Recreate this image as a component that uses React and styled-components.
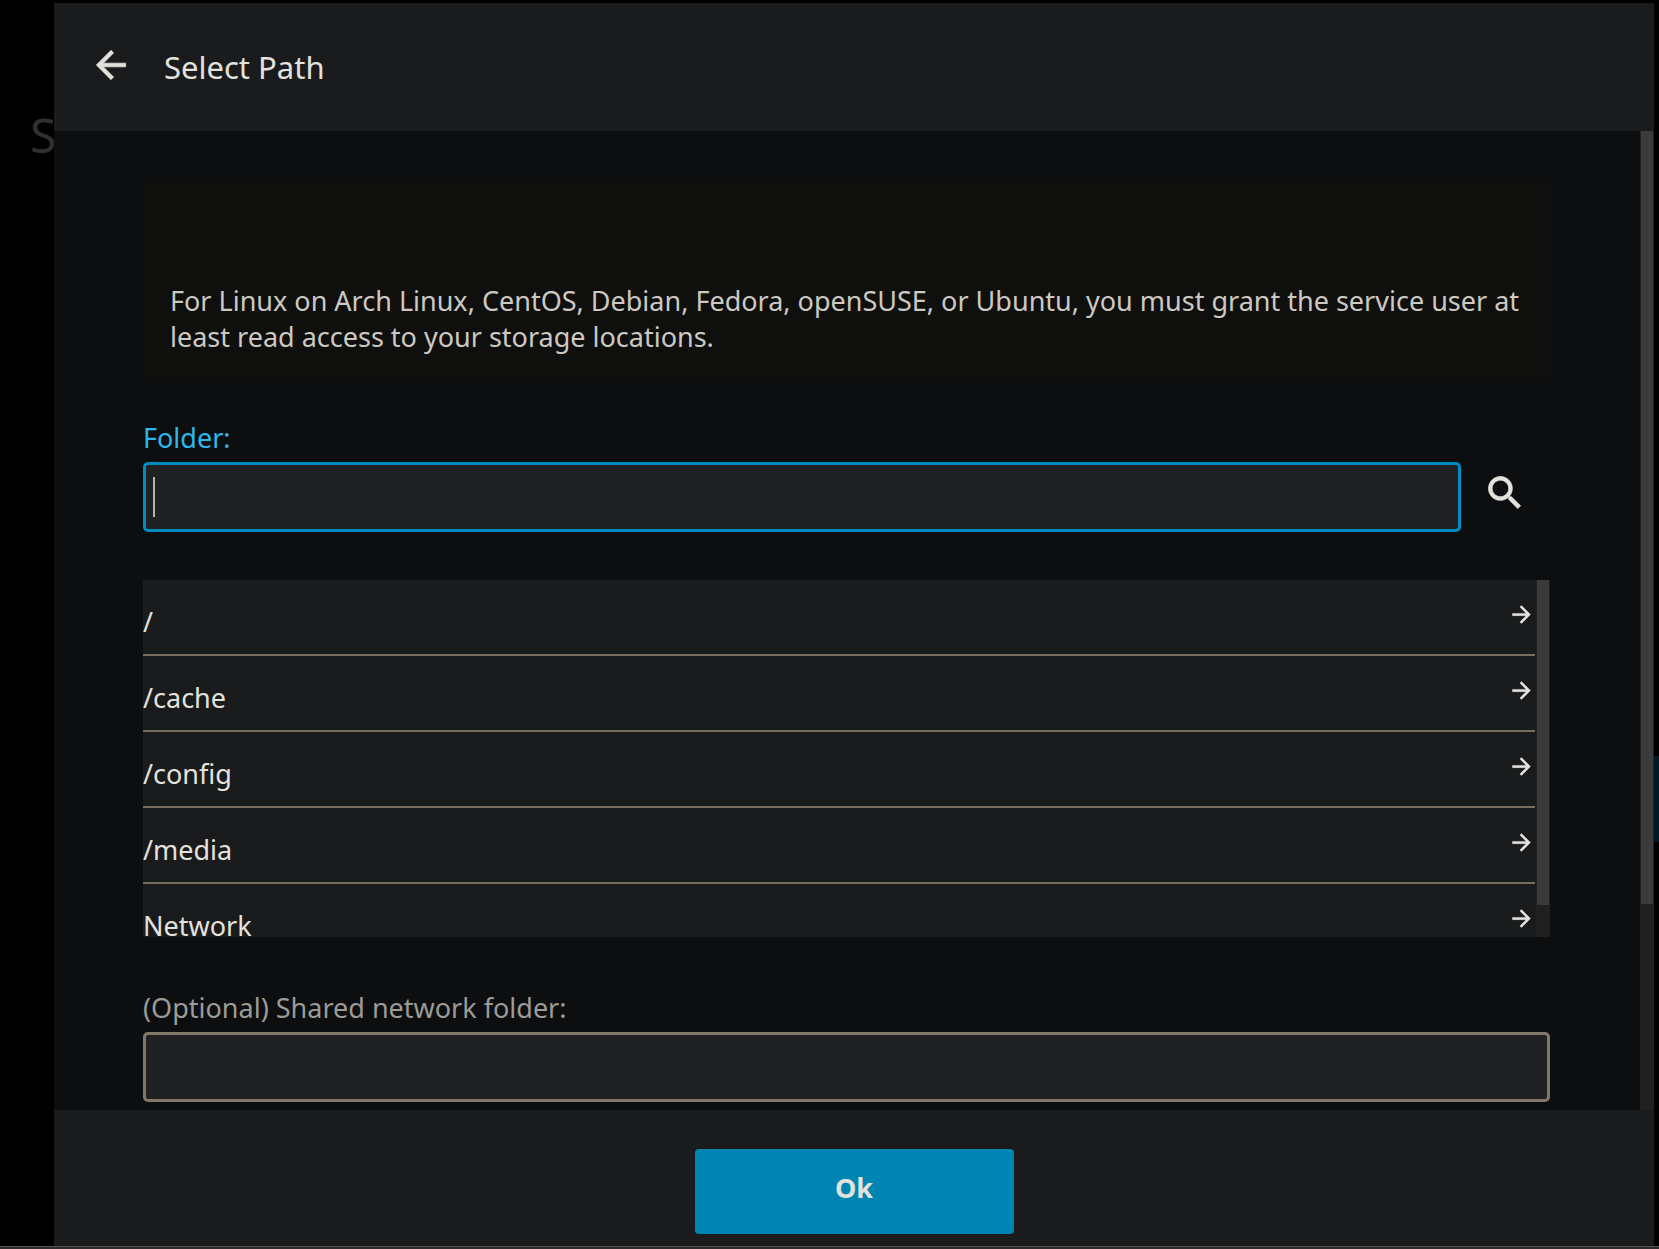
import styled, { createGlobalStyle } from "styled-components";
import { useState } from "react";

const GlobalStyle = createGlobalStyle`
  * {
    box-sizing: border-box;
  }

  body {
    margin: 0;
    background: #000;
    color: #e4e2dd;
    font-family: "Noto Sans", sans-serif;
    font-size: 27px;
    line-height: 36px;
  }

  button,
  input {
    font: inherit;
    color: inherit;
  }
`;

const Screen = styled.div`
  display: flex;
  flex-direction: column;
  height: 100vh;
  padding-top: 3px;
`;

const Backdrop = styled.div`
  display: grid;
  grid-template-columns: 54px minmax(0, 1fr) 5px;
  flex: 1;
  min-height: 0;
`;

const Gutter = styled.div`
  overflow: hidden;
`;

const PageTitle = styled.div`
  padding: 100px 0 0 30px;
  font-size: 48px;
  line-height: 64px;
  color: #303030;
`;

const PageButton = styled.div`
  height: 86px;
  margin-top: 753px;
  background: #001a26;
`;

const BottomEdge = styled.div`
  height: 3px;
  border-top: 1px solid #555453;
  background: #2c2a2a;
`;

const Dialog = styled.div`
  display: flex;
  flex-direction: column;
  min-height: 0;
  background: #0c0e0f;
`;

const Header = styled.header`
  display: flex;
  align-items: center;
  gap: 31px;
  height: 128px;
  padding: 0 35px 4px;
  background: #1a1b1c;
`;

const Title = styled.h3`
  margin: 0;
  padding-top: 3px;
  font-size: 31px;
  line-height: 42px;
  font-weight: 400;
`;

const IconButton = styled.button`
  display: flex;
  padding: 0;
  border: none;
  background: none;
  cursor: pointer;
`;

const Body = styled.div`
  display: flex;
  flex: 1;
  min-height: 0;
`;

const Form = styled.form`
  flex: 1;
  min-width: 0;
  padding: 52px 90px 0 89px;
`;

const InfoBox = styled.div`
  padding: 100px 27px 25px;
  background: #0f0f0e;
  color: #ccc9c2;
`;

const Label = styled.label`
  display: block;
  padding-bottom: 6px;
  color: ${(props) => (props.$active ? "#2cb8ec" : "#9d9b97")};
`;

const Field = styled.div`
  margin-top: ${(props) => props.$gap}px;
`;

const FieldRow = styled.div`
  display: flex;
  align-items: center;
`;

const InputWrapper = styled.div`
  position: relative;
  flex: 1;
`;

const TextInput = styled.input`
  display: block;
  width: 100%;
  height: 70px;
  padding: 0 8px;
  border: 3px solid ${(props) => (props.$active ? "#008cbf" : "#82786a")};
  border-radius: 5px;
  background: #202123;
  outline: 0;
  caret-color: transparent;
`;

const Caret = styled.span`
  position: absolute;
  top: 15px;
  left: 10px;
  width: 2px;
  height: 40px;
  background: #b5b3af;
`;

const SearchSlot = styled.div`
  padding: 0 23px 9px 22px;
`;

const ListBox = styled.div`
  display: flex;
  gap: 1px;
  height: 357px;
  margin-top: 48px;
  background: #1a1b1c;
`;

const PathList = styled.ul`
  flex: 1;
  height: 100%;
  margin: 0;
  padding: 0;
  overflow: hidden;
  list-style: none;
`;

const PathItem = styled.button`
  display: flex;
  align-items: center;
  justify-content: space-between;
  width: 100%;
  height: 76px;
  padding: 0;
  border: none;
  border-bottom: 2px solid #776e61;
  background: none;
  text-align: left;
  cursor: pointer;

  span {
    padding-top: 9px;
  }

  svg {
    margin-bottom: 5px;
  }
`;

const Track = styled.div`
  width: 14px;
  padding: 0 1px;
  background: #202020;
`;

const Thumb = styled.div`
  height: ${(props) => props.$size}%;
  background: #3b3b3b;
`;

const Footer = styled.footer`
  display: flex;
  justify-content: center;
  height: 136px;
  padding: 39px 0 12px;
  background: #1a1b1c;
`;

const SubmitButton = styled.button`
  width: 319px;
  padding: 0 0 8px;
  border: none;
  border-radius: 4px;
  background: #0084b2;
  font-weight: 700;
  cursor: pointer;
`;

const ICONS = {
  back: "M20 11H7.83l5.59-5.59L12 4l-8 8 8 8 1.41-1.41L7.83 13H20v-2z",
  forward: "M12 4l-1.41 1.41L16.17 11H4v2h12.17l-5.58 5.59L12 20l8-8z",
  search:
    "M15.5 14h-.79l-.28-.27C15.41 12.59 16 11.11 16 9.5 16 5.91 13.09 3 9.5 3S3 5.91 3 9.5 5.91 16 9.5 16c1.61 0 3.09-.59 4.23-1.57l.27.28v.79l5 4.99L20.49 19l-4.99-5zm-6 0C7.01 14 5 11.99 5 9.5S7.01 5 9.5 5 14 7.01 14 9.5 11.99 14 9.5 14z",
};

const Icon = ({ name, size }) => (
  <svg
    width={size}
    height={size}
    viewBox="0 0 24 24"
    fill="currentColor"
    stroke="currentColor"
    strokeWidth="0.4"
  >
    <path d={ICONS[name]} />
  </svg>
);

const PATHS = ["/", "/cache", "/config", "/media", "Network"];

const DirectoryList = ({ onChoose }) => (
  <ListBox>
    <PathList>
      {PATHS.map((path) => (
        <li key={path}>
          <PathItem type="button" onClick={() => onChoose(path)}>
            <span>{path}</span>
            <Icon name="forward" size={27} />
          </PathItem>
        </li>
      ))}
    </PathList>
    <Track>
      <Thumb $size={91} />
    </Track>
  </ListBox>
);

const App = () => {
  const [folder, setFolder] = useState("");
  const [network, setNetwork] = useState("");

  return (
    <Screen>
      <GlobalStyle />
      <Backdrop>
        <Gutter>
          <PageTitle>S</PageTitle>
        </Gutter>
        <Dialog role="dialog" aria-labelledby="dialog-title">
          <Header>
            <IconButton type="button" aria-label="Back">
              <Icon name="back" size={44} />
            </IconButton>
            <Title id="dialog-title">Select Path</Title>
          </Header>
          <Body>
            <Form id="path-form" onSubmit={(e) => e.preventDefault()}>
              <InfoBox>
                For Linux on Arch Linux, CentOS, Debian, Fedora, openSUSE, or
                Ubuntu, you must grant the service user at least read access to
                your storage locations.
              </InfoBox>
              <Field $gap={40}>
                <Label $active htmlFor="folder">
                  Folder:
                </Label>
                <FieldRow>
                  <InputWrapper>
                    <TextInput
                      $active
                      id="folder"
                      value={folder}
                      onChange={(e) => setFolder(e.target.value)}
                    />
                    {!folder && <Caret />}
                  </InputWrapper>
                  <SearchSlot>
                    <IconButton type="button" aria-label="Search">
                      <Icon name="search" size={44} />
                    </IconButton>
                  </SearchSlot>
                </FieldRow>
              </Field>
              <DirectoryList onChoose={setFolder} />
              <Field $gap={53}>
                <Label htmlFor="network">
                  (Optional) Shared network folder:
                </Label>
                <TextInput
                  id="network"
                  value={network}
                  onChange={(e) => setNetwork(e.target.value)}
                />
              </Field>
            </Form>
            <Track>
              <Thumb $size={79} />
            </Track>
          </Body>
          <Footer>
            <SubmitButton type="submit" form="path-form">
              Ok
            </SubmitButton>
          </Footer>
        </Dialog>
        <Gutter>
          <PageButton />
        </Gutter>
      </Backdrop>
      <BottomEdge />
    </Screen>
  );
};

export default App;
